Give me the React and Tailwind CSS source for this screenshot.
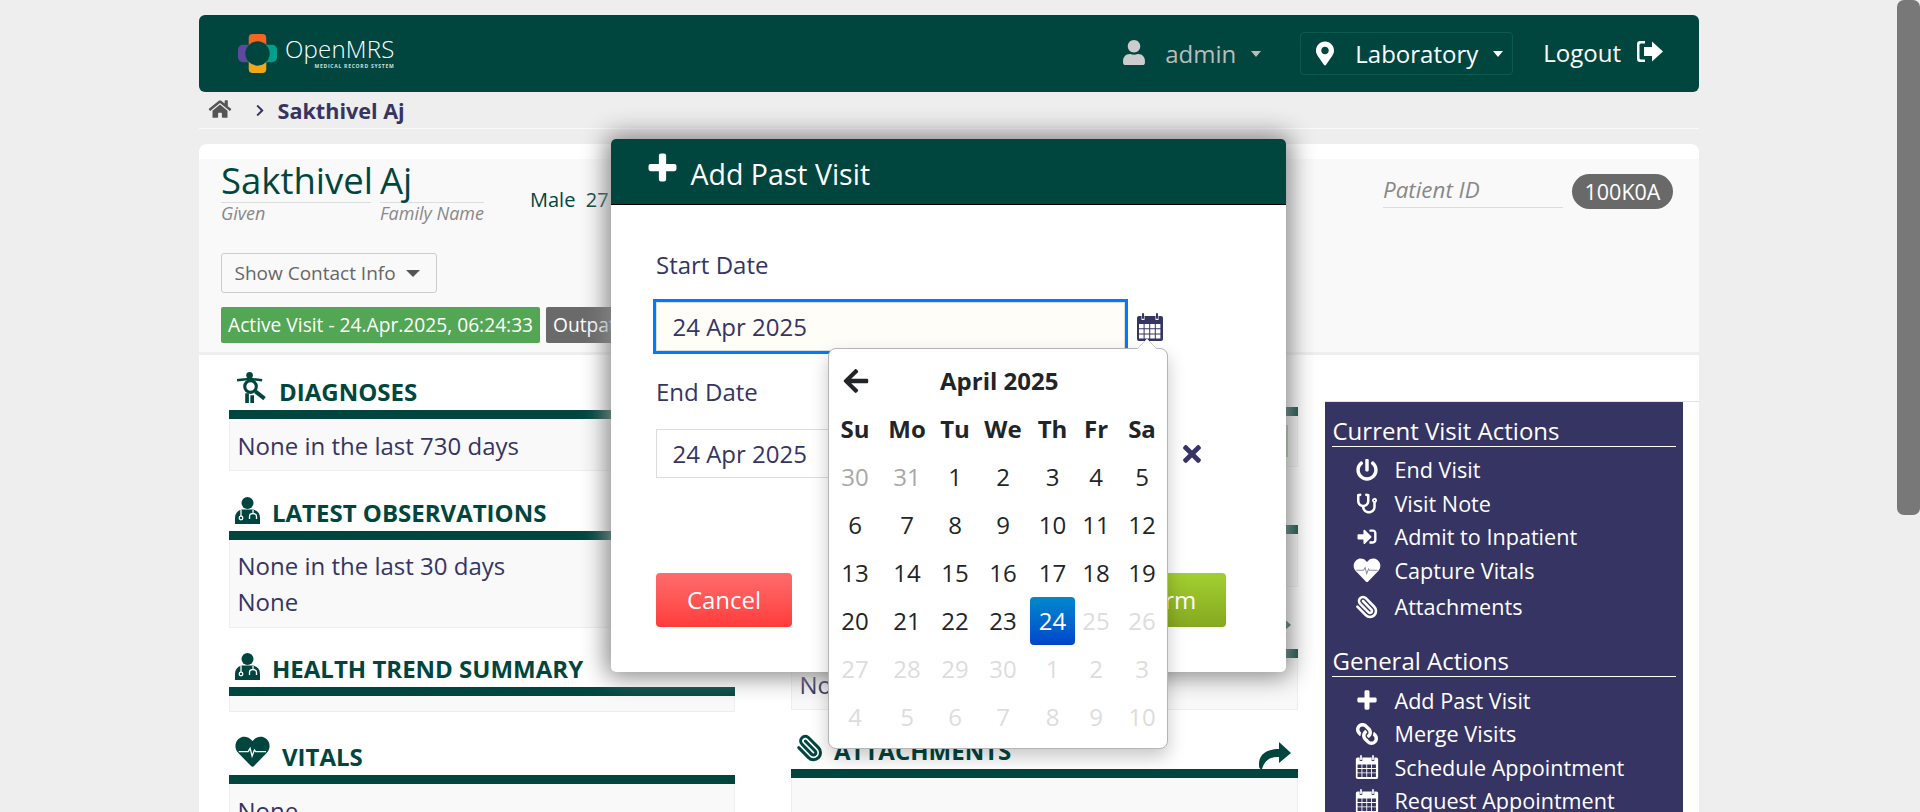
import React from "react";
import { Paperclip } from "lucide-react";
import {
  FaHome, FaUser, FaMapMarkerAlt, FaChevronRight, FaPowerOff, FaStethoscope, FaSignInAlt,
  FaLink, FaArrowLeft, FaTimes,
} from "react-icons/fa";

const Plus = ({ className }) => (
  <svg viewBox="0 0 28 28" className={className} fill="currentColor">
    <path d="M10.5 2.5a2 2 0 0 1 2-2h3a2 2 0 0 1 2 2v8h8a2 2 0 0 1 2 2v3a2 2 0 0 1-2 2h-8v8a2 2 0 0 1-2 2h-3a2 2 0 0 1-2-2v-8h-8a2 2 0 0 1-2-2v-3a2 2 0 0 1 2-2h8z" />
  </svg>
);

const Calendar = ({ className }) => {
  let cells = "";
  for (let r = 0; r < 3; r++)
    for (let c = 0; c < 4; c++) {
      const x = 3 + c * 5.6;
      const y = 11 + r * 5.2;
      cells += `M${x} ${y}h4.6v4.2h-4.6z`;
    }
  return (
    <svg viewBox="0 0 28 28" className={className} fill="currentColor">
      <path
        fillRule="evenodd"
        d={`M3 3h2.5v4h3v-4h11v4h3v-4h2.5a2 2 0 0 1 2 2v21a2 2 0 0 1-2 2h-22a2 2 0 0 1-2-2v-21a2 2 0 0 1 2-2z${cells}`}
      />
      <rect x="6" y="0" width="2" height="6" rx="1" />
      <rect x="20" y="0" width="2" height="6" rx="1" />
    </svg>
  );
};

const HeartPulse = ({ className, line }) => (
  <svg viewBox="0 0 512 480" className={className}>
    <path
      fill="currentColor"
      d="M462.3 42.6C407.5-4.1 326 4.3 275.7 56.2L256 76.5l-19.7-20.3C186.1 4.3 104.5-4.1 49.7 42.6c-62.8 53.6-66.1 149.8-9.9 207.9l193.5 199.8c12.5 12.9 32.8 12.9 45.3 0l193.5-199.8c56.3-58.1 53-154.3-9.8-207.9z"
    />
    <polyline fill="none" stroke={line} strokeWidth="20" points="50,235 190,235 220,185 250,300 285,210 305,235 460,235" />
  </svg>
);

const Logout = ({ className }) => (
  <svg viewBox="0 0 26 21" className={className} fill="currentColor">
    <path d="M3 0h5v2.500H4a1.500 1.500 0 0 0-1.500 1.500v13A1.500 1.500 0 0 0 4 18.500h4V21H3a3 3 0 0 1-3-3V3a3 3 0 0 1 3-3z" />
    <path d="M15 0.500L26 10.500 15 20.500v-5.500H7V6h8z" />
  </svg>
);

const ShareArrow = ({ className }) => (
  <svg viewBox="0 0 32 27" className={className} fill="currentColor">
    <path d="M20 0L32 11 20 21V15C12 15 6 17 3 27 0 27 0 25 0 22 0 12 8 7 20 7Z" />
  </svg>
);

const DiagnosisIcon = ({ className }) => (
  <svg viewBox="0 0 30 32" className={className}>
    <circle cx="13" cy="3.400" r="3.400" fill="currentColor" />
    <path d="M0 8.500 L9 7.500 Q13 6.500 17 7.500 L26 8.500" stroke="currentColor" strokeWidth="2.600" fill="none" />
    <circle cx="14" cy="15" r="6" stroke="currentColor" strokeWidth="3.200" fill="none" />
    <path d="M19 20 L28.500 27.500" stroke="currentColor" strokeWidth="4" />
    <path d="M8.500 22h3.800v10H8.500zM13.800 24h3.800v8H13.800z" fill="currentColor" />
  </svg>
);

const DoctorIcon = ({ className }) => (
  <svg viewBox="0 0 25 27" className={className}>
    <circle cx="12.500" cy="6" r="6" fill="currentColor" />
    <path d="M0 27v-6q0-7 7-8.500h11q7 1.500 7 8.500v6z" fill="currentColor" />
    <circle cx="6" cy="21" r="1.800" fill="none" stroke="#fff" strokeWidth="1.300" />
    <path d="M6 19v-6M18 13v3M14.500 22v-2.500q0-3 3.500-3t3.500 3V22" fill="none" stroke="#fff" strokeWidth="1.300" />
  </svg>
);

const Logo = () => (
  <svg viewBox="0 0 40 40" className="w-[39px] h-[39px]">
    <rect x="0" y="11" width="20" height="18" rx="5" fill="#5b4a9e" />
    <rect x="20" y="11" width="20" height="18" rx="5" fill="#00a08a" />
    <rect x="11" y="0" width="18" height="20" rx="4" fill="#f26522" />
    <rect x="11" y="20" width="18" height="20" rx="4" fill="#f0a818" />
    <circle cx="20" cy="20" r="12.500" fill="#00463f" />
  </svg>
);

const Caret = ({ color }) => (
  <div className={`w-0 h-0 border-x-[5.5px] border-t-[6px] border-x-transparent ${color}`} />
);

const Section = ({ mt, icon, title, titleClass, right, children, bodyClass }) => (
  <div className={mt}>
    <div className="h-[36px] flex items-center relative">
      {icon}
      <span className={`text-[24px] font-bold text-[#00463f] leading-[36px] whitespace-nowrap ${titleClass}`}>{title}</span>
      {right}
    </div>
    <div className="h-[9px] bg-[#00463f]" />
    <div className={`bg-[#f9f9f9] border border-t-0 border-[#eeeeee] text-[24px] leading-[36px] text-[#363463] px-[7.5px] ${bodyClass}`}>
      {children}
    </div>
  </div>
);

const ActionItem = ({ icon, label, cls = "" }) => (
  <div className={`h-[33.5px] flex items-center pl-[24px] text-white text-[21.6px] leading-[33px] whitespace-nowrap ${cls}`}>
    <div className="w-[36px] flex justify-center shrink-0">{icon}</div>
    <span className="ml-[9.5px]">{label}</span>
  </div>
);

const gridCols = "grid grid-cols-[50px_54px_42px_54px_45px_42px_50px]";
const weekdays = ["Su", "Mo", "Tu", "We", "Th", "Fr", "Sa"];
const days = [
  [["30", "o"], ["31", "o"], ["1"], ["2"], ["3"], ["4"], ["5"]],
  [["6"], ["7"], ["8"], ["9"], ["10"], ["11"], ["12"]],
  [["13"], ["14"], ["15"], ["16"], ["17"], ["18"], ["19"]],
  [["20"], ["21"], ["22"], ["23"], ["24", "s"], ["25", "d"], ["26", "d"]],
  [["27", "d"], ["28", "d"], ["29", "d"], ["30", "d"], ["1", "d"], ["2", "d"], ["3", "d"]],
  [["4", "d"], ["5", "d"], ["6", "d"], ["7", "d"], ["8", "d"], ["9", "d"], ["10", "d"]],
];
const dayClass = {
  o: "text-[#a8a8a8]",
  d: "text-[#dddddd]",
  s: "text-white bg-gradient-to-b from-[#0088cc] to-[#0044cc] rounded-[4px]",
};

export default function App() {
  return (
    <div className="relative h-[812px] overflow-hidden bg-[#eeeeee] font-['Open_Sans',sans-serif]">
      <div className="relative w-[1500px] ml-[199px] pt-[15px]">
        {/* top bar */}
        <header className="h-[77px] bg-[#00463f] rounded-[6px] flex items-center pl-[39px] pr-[36px]">
          <Logo />
          <div className="ml-[8px] flex flex-col items-end">
            <div className="text-[24px] font-light text-white leading-[28px] -mt-[4px] tracking-[0.2px]">OpenMRS</div>
            <div className="text-[5px] font-bold text-[#cfe0dd] leading-[6px] tracking-[0.75px] whitespace-nowrap">MEDICAL RECORD SYSTEM</div>
          </div>
          <div className="ml-auto flex items-center">
            <FaUser className="w-[24px] h-[25px] text-[#cccccc] -mt-[3px]" />
            <span className="ml-[19px] text-[24px] text-[#bbbbbb] leading-[36px]">admin</span>
            <div className="ml-[15px]"><Caret color="border-t-[#bbbbbb]" /></div>
            <div className="ml-[39px] h-[43px] w-[213px] border border-[#0a5a50] rounded-[4px] flex items-center pl-[15px]">
              <FaMapMarkerAlt className="w-[18px] h-[25px] text-white" />
              <span className="ml-[21px] text-[24px] text-white leading-[36px]">Laboratory</span>
              <div className="ml-[15px]"><Caret color="border-t-white" /></div>
            </div>
            <span className="ml-[30px] text-[24px] text-white leading-[36px] -mt-[2px]">Logout</span>
            <Logout className="ml-[16px] w-[26px] h-[21px] text-white -mt-[4px]" />
          </div>
        </header>

        {/* breadcrumb */}
        <nav className="h-[37px] border-b border-[#fafafa] flex items-center pl-[9px]">
          <FaHome className="w-[24px] h-[20px] text-[#555555] -mt-[3px]" />
          <FaChevronRight className="ml-[22px] w-[12px] h-[13px] text-[#363463]" />
          <span className="ml-[11.5px] text-[21.6px] font-bold text-[#363463] leading-[30px] mt-[1px]">Sakthivel Aj</span>
        </nav>

        {/* main card */}
        <main className="mt-[15px] bg-white rounded-t-[8px] pt-[15px]">
          <section className="h-[193px] bg-[#f9f9f9] pl-[22px] pr-[26px]">
            <div className="flex items-start">
              <div>
                <div className="flex gap-[9px]">
                  <div className="w-[150px] h-[44px] border-b border-[#dddddd] text-[36.5px] leading-[43px] text-[#00463f] whitespace-nowrap">Sakthivel</div>
                  <div className="w-[104px] h-[44px] border-b border-[#dddddd] text-[36.5px] leading-[43px] text-[#00463f]">Aj</div>
                </div>
                <div className="flex gap-[9px] text-[18px] italic text-[#888888] leading-[21px]">
                  <div className="w-[150px]">Given</div>
                  <div className="w-[104px] whitespace-nowrap">Family Name</div>
                </div>
              </div>
              <div className="ml-[46px] mt-[27px] text-[20px] leading-[28px] text-[#00463f] whitespace-nowrap">Male&nbsp;&nbsp;27</div>
              <div className="ml-auto mt-[16px] w-[180px] h-[33px] border-b border-[#dddddd] text-[22.4px] italic text-[#888888] leading-[30px]">Patient ID</div>
              <div className="ml-[9px] mt-[15px] w-[101px] h-[35px] rounded-full bg-[#696969] text-white text-[21.5px] leading-[35px] text-center">100K0A</div>
            </div>
            <div className="mt-[29px] w-[216px] h-[40px] border border-[#cccccc] rounded-[3px] flex items-center pl-[12.5px] text-[19px] text-[#666666] whitespace-nowrap">
              Show Contact Info
              <div className="ml-[10px]"><div className="w-0 h-0 border-x-[7px] border-t-[7px] border-x-transparent border-t-[#555555]" /></div>
            </div>
            <div className="mt-[14px] flex gap-[6px] text-[19.2px] text-white leading-[36px] whitespace-nowrap">
              <div className="w-[319px] h-[36px] bg-[#53a653] rounded-[2px] pl-[7px]">Active Visit - 24.Apr.2025, 06:24:33</div>
              <div className="w-[130px] h-[36px] bg-[#6a6a6a] rounded-[2px] pl-[7px]">Outpatient</div>
            </div>
          </section>
          <div className="h-[3px] bg-[#eeeeee]" />

          <div className="flex pl-[30px]">
            {/* left column */}
            <div className="w-[506px] shrink-0">
              <Section
                mt="mt-[19px]"
                icon={<DiagnosisIcon className="ml-[8px] w-[29px] h-[31px] text-[#00463f] mb-[9px]" />}
                title="DIAGNOSES"
                titleClass="ml-[13px]"
                bodyClass="h-[52px] pt-[9px]"
              >
                None in the last 730 days
              </Section>
              <Section
                mt="mt-[24px]"
                icon={<DoctorIcon className="ml-[6px] w-[25px] h-[27px] text-[#00463f] mb-[5px]" />}
                title="LATEST OBSERVATIONS"
                titleClass="ml-[12px]"
                bodyClass="h-[88px] pt-[8px]"
              >
                <div>None in the last 30 days</div>
                <div>None</div>
              </Section>
              <Section
                mt="mt-[23px]"
                icon={<DoctorIcon className="ml-[6px] w-[25px] h-[27px] text-[#00463f] mb-[5px]" />}
                title="HEALTH TREND SUMMARY"
                titleClass="ml-[12px]"
                bodyClass="h-[16px]"
              />
              <Section
                mt="mt-[27px]"
                icon={<HeartPulse className="ml-[5px] w-[37px] h-[32px] text-[#00463f] mb-[10px]" line="#ffffff" />}
                title="VITALS"
                titleClass="ml-[11px]"
                bodyClass="h-[60px] pt-[9px]"
              >
                None
              </Section>
            </div>

            {/* middle column */}
            <div className="ml-[56px] w-[507px] shrink-0">
              <Section mt="mt-[16px]" bodyClass="h-[51px] pt-[9px] !px-[9px]">
                <div className="ml-auto w-[100px] h-[32px] bg-[#9cc59c]" />
              </Section>
              <Section mt="mt-[22px]" bodyClass="h-[53px]" />
              <Section
                mt="mt-[26px]"
                right={<ShareArrow className="absolute right-[7px] top-[1px] w-[32px] h-[27px] text-[#00463f]" />}
                bodyClass="h-[52px] pt-[9px]"
              >
                None
              </Section>
              <Section
                mt="mt-[23px]"
                icon={<Paperclip strokeWidth={2.6} className="ml-[5px] w-[28px] h-[28px] text-[#00463f] -scale-x-100 mb-[6px]" />}
                title="ATTACHMENTS"
                titleClass="ml-[10px]"
                right={<ShareArrow className="absolute right-[7px] top-[9px] w-[32px] h-[27px] text-[#00463f]" />}
                bodyClass="h-[60px]"
              />
            </div>

            {/* actions column */}
            <div className="ml-[27px] flex-1 mt-[46px] border-t border-[#e2e2e2] pr-[16px]">
              <aside className="bg-[#363463] h-[420px] pt-[14px]">
                <div className="mx-[7px] h-[31px] border-b border-white text-[24px] leading-[30px] text-white pl-[0.5px]">Current Visit Actions</div>
                <div className="mt-[6px]">
                  <ActionItem icon={<FaPowerOff className="w-[22px] h-[22px]" />} label="End Visit" />
                  <ActionItem icon={<FaStethoscope className="w-[20px] h-[21px]" />} label="Visit Note" />
                  <ActionItem icon={<FaSignInAlt className="w-[22px] h-[19px]" />} label="Admit to Inpatient" />
                  <ActionItem icon={<HeartPulse className="w-[28px] h-[25px] text-white" line="#8b8aa8" />} label="Capture Vitals" />
                  <ActionItem cls="mt-[3px]" icon={<Paperclip strokeWidth={2.6} className="w-[24px] h-[24px] -scale-x-100" />} label="Attachments" />
                </div>
                <div className="mx-[7px] mt-[22px] h-[31px] border-b border-white text-[24px] leading-[30px] text-white pl-[0.5px]">General Actions</div>
                <div className="mt-[7px]">
                  <ActionItem icon={<Plus className="w-[20px] h-[20px]" />} label="Add Past Visit" />
                  <ActionItem icon={<FaLink className="w-[22px] h-[22px] -scale-x-100" />} label="Merge Visits" />
                  <ActionItem icon={<Calendar className="w-[24px] h-[24px]" />} label="Schedule Appointment" />
                  <ActionItem icon={<Calendar className="w-[24px] h-[24px]" />} label="Request Appointment" />
                </div>
              </aside>
            </div>
          </div>
        </main>

        {/* modal */}
        <div className="absolute left-[412px] top-[139px] w-[675px] h-[533px] bg-white rounded-[5px] shadow-[0_0_25px_5px_#888888]">
          <div className="h-[66px] bg-[#00463f] border-b border-black rounded-t-[5px] flex items-center pl-[37px]">
            <Plus className="w-[29px] h-[29px] text-white -mt-[8px]" />
            <span className="ml-[13.5px] text-[28.5px] text-white leading-[40px] mt-[5px]">Add Past Visit</span>
          </div>
          <div className="pt-[42px] pl-[45px] pr-[60px] text-[#363463]">
            <div className="text-[24px] leading-[36px]">Start Date</div>
            <div className="mt-[19px] flex items-center">
              <div className="w-[469px] h-[49px] bg-[#fffdf7] border border-[#dddddd] outline-[3px] outline-solid outline-[#007bff] pl-[15.5px] text-[24px] leading-[47px]">24 Apr 2025</div>
              <Calendar className="ml-[11px] w-[28px] h-[28px] mt-[1px]" />
            </div>
            <div className="mt-[23px] text-[24px] leading-[36px]">End Date</div>
            <div className="mt-[19px] flex items-center">
              <div className="w-[469px] h-[49px] bg-white border border-[#dddddd] pl-[15.5px] text-[24px] leading-[47px]">24 Apr 2025</div>
              <Calendar className="ml-[11px] w-[28px] h-[28px]" />
              <FaTimes className="ml-[15px] w-[26px] h-[26px]" />
            </div>
            <div className="mt-[95px] flex justify-between">
              <div className="w-[136px] h-[54px] rounded-[4px] bg-gradient-to-b from-[#ff6b6b] to-[#ff3b3b] text-white text-[24px] leading-[54px] text-center">Cancel</div>
              <div className="w-[150px] h-[54px] rounded-[4px] bg-gradient-to-b from-[#a2d030] to-[#86a820] text-white text-[24px] leading-[54px] text-center">Confirm</div>
            </div>
          </div>

          {/* date picker */}
          <div className="absolute left-[217px] top-[209px] w-[340px] h-[401px] bg-white border border-[#b5b5b5] rounded-[8px] shadow-[0_8px_18px_rgba(0,0,0,0.22)] pt-[8px] pl-[1px] text-[#212529] text-[24px]">
            <svg viewBox="0 0 20 10" className="absolute right-[10px] -top-[10px] w-[20px] h-[10px]">
              <path d="M0 10L10 0L20 10z" fill="#ffffff" />
              <path d="M0 10L10 0L20 10" fill="none" stroke="#cccccc" />
            </svg>
            <div className="h-[48px] flex items-center">
              <FaArrowLeft className="ml-[12px] w-[28px] h-[28px]" />
              <span className="ml-[70px] font-bold leading-[36px]">April 2025</span>
            </div>
            <div className={`${gridCols} h-[48px] font-bold`}>
              {weekdays.map((d) => (
                <div key={d} className="flex items-center justify-center">{d}</div>
              ))}
            </div>
            {days.map((row, i) => (
              <div key={i} className={`${gridCols} h-[48px]`}>
                {row.map(([n, k], j) => (
                  <div key={j} className={`flex items-center justify-center ${k ? dayClass[k] : ""}`}>{n}</div>
                ))}
              </div>
            ))}
          </div>
        </div>
      </div>

      {/* scrollbar */}
      <div className="absolute right-0 top-0 w-[23px] h-[515px] rounded-[7px] bg-[#787878]" />
    </div>
  );
}
